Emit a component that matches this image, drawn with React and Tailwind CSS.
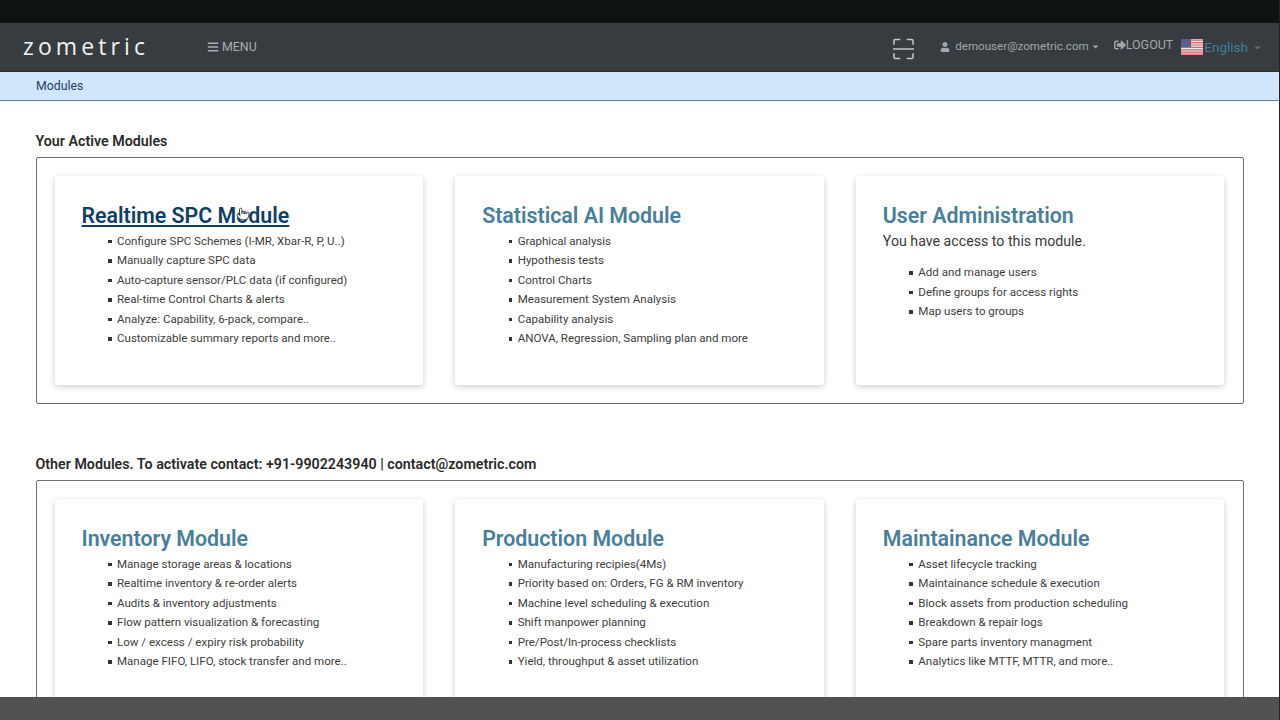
import { FaBars, FaUser, FaCaretDown, FaSignOutAlt } from "react-icons/fa";
import { Pointer } from "lucide-react";

const active = [
  {
    title: "Realtime SPC Module",
    hot: true,
    items: [
      "Configure SPC Schemes (I-MR, Xbar-R, P, U..)",
      "Manually capture SPC data",
      "Auto-capture sensor/PLC data (if configured)",
      "Real-time Control Charts & alerts",
      "Analyze: Capability, 6-pack, compare..",
      "Customizable summary reports and more..",
    ],
  },
  {
    title: "Statistical AI Module",
    items: [
      "Graphical analysis",
      "Hypothesis tests",
      "Control Charts",
      "Measurement System Analysis",
      "Capability analysis",
      "ANOVA, Regression, Sampling plan and more",
    ],
  },
  {
    title: "User Administration",
    note: "You have access to this module.",
    items: ["Add and manage users", "Define groups for access rights", "Map users to groups"],
  },
];

const other = [
  {
    title: "Inventory Module",
    items: [
      "Manage storage areas & locations",
      "Realtime inventory & re-order alerts",
      "Audits & inventory adjustments",
      "Flow pattern visualization & forecasting",
      "Low / excess / expiry risk probability",
      "Manage FIFO, LIFO, stock transfer and more..",
    ],
  },
  {
    title: "Production Module",
    items: [
      "Manufacturing recipies(4Ms)",
      "Priority based on: Orders, FG & RM inventory",
      "Machine level scheduling & execution",
      "Shift manpower planning",
      "Pre/Post/In-process checklists",
      "Yield, throughput & asset utilization",
    ],
  },
  {
    title: "Maintainance Module",
    items: [
      "Asset lifecycle tracking",
      "Maintainance schedule & execution",
      "Block assets from production scheduling",
      "Breakdown & repair logs",
      "Spare parts inventory managment",
      "Analytics like MTTF, MTTR, and more..",
    ],
  },
];

function ScanIcon() {
  return (
    <svg width="21" height="22" viewBox="0 0 22 22" fill="none" stroke="#c4c7c9" strokeWidth="1.6" strokeLinecap="round">
      <path d="M1 6V2.5C1 1.7 1.7 1 2.5 1H7" />
      <path d="M15 1h4.500C20.300 1 21 1.700 21 2.500V6" />
      <path d="M1 16v3.500C1 20.300 1.700 21 2.500 21H7" />
      <path d="M15 21h4.500c.8 0 1.500-.7 1.500-1.500V16" />
      <path d="M0 11h22" />
    </svg>
  );
}

function Flag() {
  return (
    <svg width="22" height="16" viewBox="0 0 22 16" className="shrink-0">
      <rect width="22" height="16" rx="1" fill="#f3e6e6" />
      <path d="M0 1.200h22M0 3.600h22M0 6h22M0 8.400h22M0 10.800h22M0 13.200h22M0 15.200h22" stroke="#d8656b" strokeWidth="1.200" />
      <rect width="10" height="8" fill="#5a5f92" />
    </svg>
  );
}

function Card({ card }) {
  return (
    <div className="relative h-[209px] rounded-[3px] bg-white pl-[27px] pt-[26px] shadow-[0_2px_6px_rgba(0,0,0,0.2)]">
      <h2
        className={`text-[21.350px] font-semibold leading-[27px] ${
          card.hot ? "text-[#0f3f68] underline underline-offset-2" : "text-[#47809b]"
        }`}
      >
        {card.title}
      </h2>
      {card.hot && (
        <Pointer size={14} fill="#ffffff" stroke="#333333" strokeWidth={1.500} className="absolute left-[181px] top-[31px]" />
      )}
      {card.note && <p className="mt-[2px] text-[14.200px] leading-[20px] text-[#3a3a3a]">{card.note}</p>}
      <ul className={`list-none pl-[35.500px] ${card.note ? "mt-[12px]" : "mt-[2.500px]"}`}>
        {card.items.map((item) => (
          <li key={item} className="relative text-[11.550px] leading-[19.500px] text-[#3d3d3d]">
            <span className="absolute left-[-9px] top-[8px] h-[3.500px] w-[3.500px] bg-[#333]" />
            {item}
          </li>
        ))}
      </ul>
    </div>
  );
}

function App() {
  return (
    <div className="flex h-screen flex-col overflow-hidden border-r border-[#222] bg-white font-['Roboto',sans-serif]">
      <div className="h-[23px] shrink-0 bg-[#0e1213]" />
      <header className="flex h-[49px] shrink-0 items-center border-b border-[#2a2e30] bg-[#363c3f] pl-[23px] pr-[17px]">
        <span className="relative top-[-1px] w-[184px] font-['Open_Sans',sans-serif] text-[23px] font-medium tracking-[4.100px] text-[#f2f2f2]">zometric</span>
        <a href="#" className="flex items-center gap-[3px] text-[12.400px] text-[#a9adaf]">
          <FaBars className="text-[12px]" />
          MENU
        </a>
        <div className="ml-auto mr-[26px] mt-[4px]">
          <ScanIcon />
        </div>
        <a href="#" className="flex items-center text-[11.600px] text-[#a3a7a9]">
          <FaUser className="mr-[5px] text-[10px]" />
          demouser@zometric.com
          <FaCaretDown className="ml-[2px] text-[9px]" />
        </a>
        <a href="#" className="relative top-[-2px] ml-[14px] flex items-center text-[12.500px] text-[#a3a7a9]">
          <FaSignOutAlt className="text-[12px]" />
          LOGOUT
        </a>
        <div className="ml-[8px]">
          <Flag />
        </div>
        <span className="ml-[1px] text-[13.500px] text-[#3f7f9e]">English</span>
        <FaCaretDown className="ml-[5px] text-[9px] text-[#6d7274]" />
      </header>
      <div className="flex h-[29px] shrink-0 items-center border-b border-[#5f7d92] bg-[#d0e6fb] pl-[36px] text-[12.300px] text-[#1f3f5f]">
        Modules
      </div>
      <main className="min-h-0 flex-1 overflow-hidden pl-[35.500px] pt-[32px]">
        <h3 className="text-[14.250px] font-semibold leading-[16px] text-[#2a2a2a]">Your Active Modules</h3>
        <section className="mt-[8px] grid h-[247px] w-[1208px] grid-cols-3 gap-[32px] rounded-[2px] border border-[#6e6e6e] px-[18px] pt-[18px]">
          {active.map((card) => (
            <Card key={card.title} card={card} />
          ))}
        </section>
        <h3 className="mt-[52px] text-[14.250px] font-semibold leading-[16px] text-[#2a2a2a]">
          Other Modules. To activate contact: +91-9902243940 | contact@zometric.com
        </h3>
        <section className="mt-[8px] grid h-[248px] w-[1208px] grid-cols-3 gap-[32px] rounded-[2px] border border-[#6e6e6e] px-[18px] pt-[18px]">
          {other.map((card) => (
            <Card key={card.title} card={card} />
          ))}
        </section>
      </main>
      <div className="h-[23px] shrink-0 bg-[#525252]" />
    </div>
  );
}

export default App;
